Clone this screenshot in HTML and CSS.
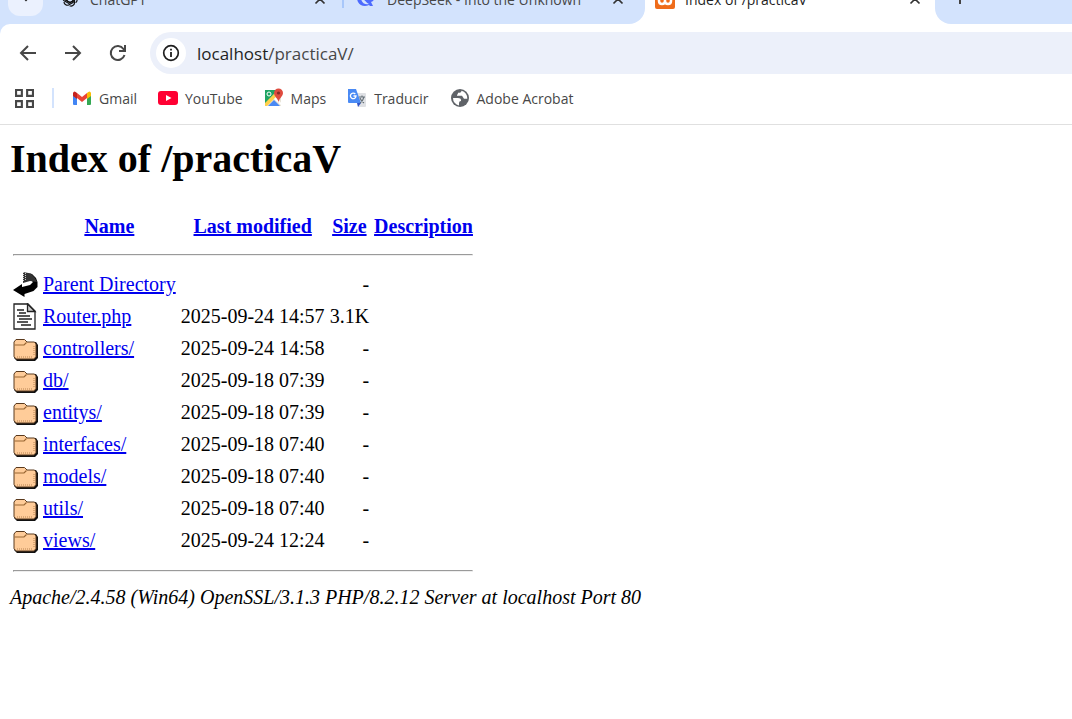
FILE: index.html
```html
<!DOCTYPE html>
<html lang="es">
<head>
<meta charset="utf-8">
<title>Index of /practicaV</title>
<link rel="stylesheet" href="styles.css">
</head>
<body>
<svg class="defs" aria-hidden="true">
  <symbol id="folder" viewBox="0 0 25 27">
    <path d="M3 7l2-2h7l2 2h9l2 3v13l-3 3H4l-3-3z" fill="#111"/>
    <path d="M1 7l2-2.500h8.500L14 7h7.500L23 9v12.500L21 24H3l-2-2.500z" fill="#ffcc99" stroke="#5a3a1e" stroke-width="1"/>
    <path d="M1.500 10h9.500l2.500-2.500" fill="none" stroke="#996633" stroke-width="1.200"/>
    <path d="M4 22h16M21 11v10" stroke="#b98350" stroke-width="1" stroke-dasharray="1 1"/>
  </symbol>
  <symbol id="close" viewBox="0 0 12 12">
    <path d="M1.500 1.500l9 9M10.500 1.500l-9 9" stroke="currentColor" stroke-width="1.700"/>
  </symbol>
</svg>

<header class="browser">
  <div class="strip">
    <div class="inactive-tabs">
      <button class="tab-search" aria-label="Buscar pestañas"><svg width="12" height="8" viewBox="0 0 12 8"><path d="M2 1l4 4 4-4" fill="none" stroke="#222" stroke-width="2"/></svg></button>
      <div class="tab tab-first">
        <svg width="18" height="18" viewBox="0 0 18 18" fill="none" stroke="#111" stroke-width="1.200"><g id="petal"><path d="M9 5.500l3.200 1.800v5L8 14.800A3.400 3.400 0 0 1 3 12"/></g><use href="#petal" transform="rotate(60 9 9)"/><use href="#petal" transform="rotate(120 9 9)"/><use href="#petal" transform="rotate(180 9 9)"/><use href="#petal" transform="rotate(240 9 9)"/><use href="#petal" transform="rotate(300 9 9)"/></svg>
        <span class="tab-title">ChatGPT</span>
        <button class="close" aria-label="Cerrar ChatGPT"><svg width="12" height="12"><use href="#close"/></svg></button>
      </div>
      <span class="tab-rule"></span>
      <div class="tab tab-second">
        <svg width="18" height="18" viewBox="0 0 18 18"><path d="M1 7c1-3 5-4 8-2 2 1 3 3 4 4 2 0 3-2 4-4 1 4 0 6-3 7l2 4h-3l-1-1c-4 2-9 1-11-3C0 10 0 8 1 7z" fill="#4d6bfe"/><path d="M4 9c3-1 5 4 8 5-4 1-7-1-8-5z" fill="#d3e3fd"/></svg>
        <span class="tab-title">DeepSeek - Into the Unknown</span>
        <button class="close" aria-label="Cerrar DeepSeek"><svg width="12" height="12"><use href="#close"/></svg></button>
      </div>
    </div>
    <div class="tab tab-active">
      <svg width="20" height="20" viewBox="0 0 20 20"><rect width="20" height="20" rx="2" fill="#ef6c1a"/><path d="M7 5q-3 0-3 5v2q0 3 3 3t3-3v-2M10 12q0 3 3 3t3-3v-2q0-5-3-5" fill="none" stroke="#fff" stroke-width="2.500" stroke-linecap="round"/></svg>
      <span class="tab-title">Index of /practicaV</span>
      <button class="close" aria-label="Cerrar Index of"><svg width="12" height="12"><use href="#close"/></svg></button>
    </div>
    <div class="strip-end">
      <button class="new-tab" aria-label="Nueva pestaña"><svg width="14" height="14" viewBox="0 0 14 14"><path d="M7 0v12M1 6h12" stroke="#444" stroke-width="2"/></svg></button>
    </div>
  </div>

  <div class="bars">
    <div class="toolbar">
      <button class="nav" aria-label="Atrás"><svg width="18" height="18" viewBox="0 0 18 18"><path d="M17 9H2.500M9 2L2 9l7 7"/></svg></button>
      <button class="nav" aria-label="Adelante"><svg width="18" height="18" viewBox="0 0 18 18"><path d="M1 9h14.500M9 2l7 7-7 7"/></svg></button>
      <button class="nav" aria-label="Recargar"><svg width="18" height="18" viewBox="0 0 18 18"><path d="M15.500 11A7 7 0 1 1 14.500 5L16 6.500M16 1v6h-6"/></svg></button>
      <div class="address">
        <button class="info" aria-label="Información del sitio"><svg width="18" height="18" viewBox="0 0 18 18"><circle cx="9" cy="9" r="7.300" fill="none" stroke="#1f1f1f" stroke-width="1.700"/><path d="M9 8v5M9 4.800v1.800" stroke="#1f1f1f" stroke-width="1.800"/></svg></button>
        <a class="url" href="#"><span class="host">localhost</span>/practicaV/</a>
      </div>
    </div>
    <nav class="bookmarks" aria-label="Marcadores">
      <button class="apps" aria-label="Aplicaciones"><svg width="19" height="19" viewBox="0 0 18 18" fill="none" stroke="#474747" stroke-width="2"><path d="M1 1h5.500v5.500H1zM11.500 1H17v5.500h-5.500zM1 11.500h5.500V17H1zM11.500 11.500H17V17h-5.500z"/></svg></button>
      <span class="rule"></span>
      <a class="mark" href="#"><svg width="20" height="20" viewBox="0 0 20 20"><path d="M1 6v10q0 1 1 1h3V8z" fill="#4285f4"/><path d="M19 6v10q0 1-1 1h-3V8z" fill="#34a853"/><path d="M15 5v6l4-3V5q-1-3-4 0z" fill="#fbbc04"/><path d="M5 5v6L1 8V5q1-3 4 0z" fill="#c5221f"/><path d="M5 5l5 4 5-4v5l-5 4-5-4z" fill="#ea4335"/></svg>Gmail</a>
      <a class="mark" href="#"><svg width="20" height="20" viewBox="0 0 20 20"><rect y="3" width="20" height="14" rx="3" fill="#ff0033"/><path d="M8 7l5.500 3L8 13z" fill="#fff"/></svg>YouTube</a>
      <a class="mark" href="#"><svg width="20" height="20" viewBox="0 0 20 20"><path d="M1 2h16v16H1z" fill="#e8e4d8"/><path d="M1 2h13L1 16z" fill="#1fa463"/><path d="M1 18v-3L14 2l3 2L3 18z" fill="#ffd04b"/><path d="M4 18l6-6 6 6z" fill="#4a89f3"/><path d="M10 11l2-2 6 7v2z" fill="#fff"/><circle cx="5" cy="6" r="2" fill="none" stroke="#fff"/><path d="M14.500 15c0-5-4.500-6-4.500-10a4.500 4.500 0 0 1 9 0c0 4-4.500 5-4.500 10z" fill="#df4b3e"/><circle cx="14.500" cy="5" r="1.600" fill="#842b26"/></svg>Maps</a>
      <a class="mark" href="#"><svg width="20" height="20" viewBox="0 0 20 20"><path d="M8 5h10q1 0 1 1v12q0 1-1 1h-7z" fill="#dfe1e5"/><path d="M10 15h4l-3 4z" fill="#3153c7"/><path d="M1 1h8l5 14H2q-1 0-1-1z" fill="#4a8af4"/><path d="M8.300 6A2.800 2.800 0 1 0 9 8H6.500" fill="none" stroke="#fff" stroke-width="1.300"/><path d="M12 9h6M15 7.500V9M17 9q-1 4-4 6M13 10q1 3 4 5" fill="none" stroke="#657078" stroke-width="1.100"/></svg>Traducir</a>
      <a class="mark" href="#"><svg width="20" height="20" viewBox="0 0 20 20"><circle cx="10" cy="10" r="9" fill="#5f6368"/><path d="M3 10h5q3 0 3 2v1q-2 0-2 2v2.500A7.500 7.500 0 0 1 3 10zM11.500 2.800q0 2-2 2H8q0 2-1 2v1h5l2 3h3.300a7.500 7.500 0 0 0-5.800-8z" fill="#fff"/></svg>Adobe Acrobat</a>
    </nav>
  </div>
</header>

<main class="page">
  <h1>Index of /practicaV</h1>
  <table>
    <thead>
      <tr class="heads"><td></td><th><a href="#">Name</a></th><th><a href="#">Last modified</a></th><th><a href="#">Size</a></th><th><a href="#">Description</a></th></tr>
      <tr><td colspan="5"><hr></td></tr>
    </thead>
    <tbody>
      <tr><td><svg class="icon" viewBox="0 0 25 27"><path d="M10 2l9 1 4 4 1.500 4v5l-4 4-9 3v3L0 19l9-6v3l8-2 3-3z" fill="#000"/><path d="M10 1l8 1.500 4 4.500 2 4-7-1-7 2z" fill="#333"/><path d="M10.500 1v10M12.500 2v8" stroke="#ccc" stroke-dasharray="1 1"/></svg></td><td><a href="#">Parent Directory</a></td><td></td><td class="num">-</td><td></td></tr>
      <tr><td><svg class="icon" viewBox="0 0 25 27"><path d="M1 1h14l7 7v18H1z" fill="#fff" stroke="#222" stroke-width="1.300"/><path d="M14.500 1v7.500h7.500z" fill="#ccc" stroke="#222" stroke-width="1.300"/><path d="M4 7h7M6 10h7M4 13h13M6 16h13M4 19h11M8 22h10" stroke="#222" stroke-width="1.600"/></svg></td><td><a href="#">Router.php</a></td><td class="num">2025-09-24 14:57</td><td class="num">3.1K</td><td></td></tr>
      <tr><td><svg class="icon"><use href="#folder"/></svg></td><td><a href="#">controllers/</a></td><td class="num">2025-09-24 14:58</td><td class="num">-</td><td></td></tr>
      <tr><td><svg class="icon"><use href="#folder"/></svg></td><td><a href="#">db/</a></td><td class="num">2025-09-18 07:39</td><td class="num">-</td><td></td></tr>
      <tr><td><svg class="icon"><use href="#folder"/></svg></td><td><a href="#">entitys/</a></td><td class="num">2025-09-18 07:39</td><td class="num">-</td><td></td></tr>
      <tr><td><svg class="icon"><use href="#folder"/></svg></td><td><a href="#">interfaces/</a></td><td class="num">2025-09-18 07:40</td><td class="num">-</td><td></td></tr>
      <tr><td><svg class="icon"><use href="#folder"/></svg></td><td><a href="#">models/</a></td><td class="num">2025-09-18 07:40</td><td class="num">-</td><td></td></tr>
      <tr><td><svg class="icon"><use href="#folder"/></svg></td><td><a href="#">utils/</a></td><td class="num">2025-09-18 07:40</td><td class="num">-</td><td></td></tr>
      <tr><td><svg class="icon"><use href="#folder"/></svg></td><td><a href="#">views/</a></td><td class="num">2025-09-24 12:24</td><td class="num">-</td><td></td></tr>
    </tbody>
    <tfoot>
      <tr><td colspan="5"><hr></td></tr>
    </tfoot>
  </table>
  <address>Apache/2.4.58 (Win64) OpenSSL/3.1.3 PHP/8.2.12 Server at localhost Port 80</address>
</main>
</body>
</html>
```
FILE: styles.css
```css
* { box-sizing: border-box; }
body { margin: 0; background: #fff; color: #000; font: 20px "Liberation Serif", serif; }
button { border: 0; padding: 0; background: none; display: flex; align-items: center; justify-content: center; flex: none; }
svg { flex: none; }
.defs { display: none; }

.browser { font: 14px "Open Sans", "Noto Sans", sans-serif; color: #474747; border-bottom: 1px solid #e0e0e0; }
.strip { display: flex; align-items: flex-end; height: 24px; overflow: hidden; }
.inactive-tabs { display: flex; align-items: center; width: 645px; height: 50px; padding-left: 8px; background: #d3e3fd; border-bottom-right-radius: 16px; }
.tab-search { width: 35px; height: 34px; border-radius: 12px; background: #ebf1fe; }
.tab { display: flex; align-items: center; gap: 11px; height: 50px; }
.tab-first { width: 265px; margin-left: 18px; }
.tab-title { flex: 1; white-space: nowrap; }
.close { width: 12px; height: 12px; color: #333; }
.tab-rule { width: 2px; height: 18px; margin: 0 13px 0 16px; background: #a8c7fa; }
.tab-second { width: 267px; gap: 12px; }
.tab-active { width: 290px; padding: 0 14px 0 10px; gap: 10px; color: #1f1f1f; }
.strip-end { flex: 1; display: flex; align-items: center; height: 50px; padding-left: 18px; background: #d3e3fd; border-bottom-left-radius: 16px; }

.bars { background: linear-gradient(#d3e3fd 12px, #fff 12px); }
.toolbar { display: flex; align-items: center; height: 58px; padding-left: 5px; background: #fff; border-top-left-radius: 10px; }
.nav { width: 45px; height: 36px; }
.nav svg { fill: none; stroke: #474747; stroke-width: 2; }
.address { flex: 1; display: flex; align-items: center; gap: 11px; height: 42px; margin-left: 10px; padding-left: 6px; background: #ecf0fa; border-radius: 21px 0 0 21px; }
.info { width: 30px; height: 30px; border-radius: 50%; background: #fff; }
.url { font-size: 17px; color: #474747; text-decoration: none; }
.host { color: #1f1f1f; }
.bookmarks { display: flex; align-items: center; height: 42px; padding: 0 15px 10px; }
.rule { width: 2px; height: 20px; margin: 0 18px; background: #d3e3fd; }
.mark { display: flex; align-items: center; gap: 7px; margin-right: 21px; color: #474747; text-decoration: none; }

.page { padding: 11px 9px; }
.page a { color: #0000ee; }
h1 { margin: 0 0 29px 1px; font-size: 40px; line-height: 46px; }
table { border-spacing: 3px; }
td, th { padding: 1px; line-height: 23px; white-space: nowrap; }
.num { text-align: right; }
.icon { display: block; width: 25px; height: 27px; }
hr { margin: 11px 0 10px; }
address { margin-left: 1px; line-height: 23px; }
```
